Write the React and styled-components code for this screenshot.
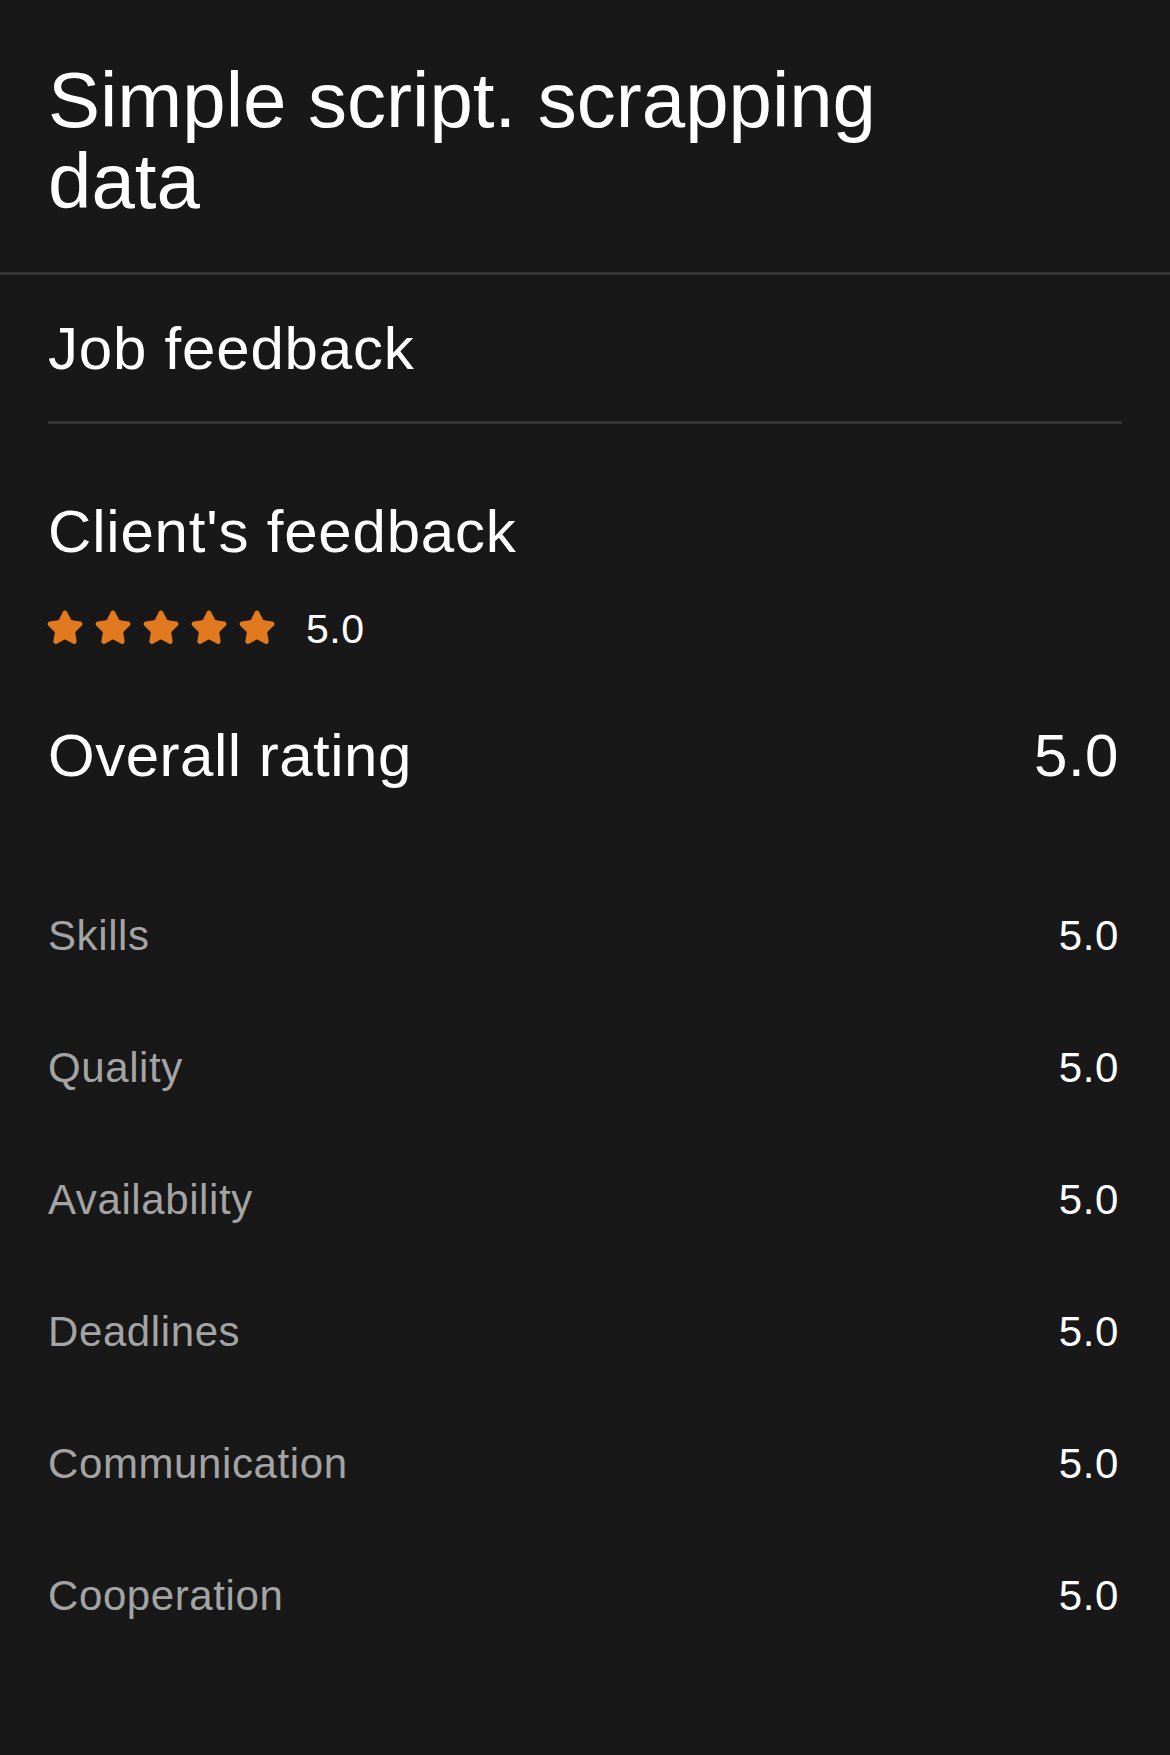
import React from 'react';
import styled, { createGlobalStyle } from 'styled-components';
import { Star } from 'lucide-react';

const ratings = [
  { label: 'Skills', value: '5.0' },
  { label: 'Quality', value: '5.0' },
  { label: 'Availability', value: '5.0' },
  { label: 'Deadlines', value: '5.0' },
  { label: 'Communication', value: '5.0' },
  { label: 'Cooperation', value: '5.0' },
];

const GlobalStyle = createGlobalStyle`
  body {
    margin: 0;
    background-color: #181818;
    font-family: 'Liberation Sans', Arial, sans-serif;
    color: #ffffff;
  }
`;

const App = () => (
  <>
    <GlobalStyle />
    <Page>
      <Header>
        <Title>Simple script. scrapping data</Title>
      </Header>
      <Content>
        <SectionTitle>Job feedback</SectionTitle>
        <Divider />
        <SectionTitle $top={72}>Client's feedback</SectionTitle>
        <StarsRow>
          <Stars>
            {[0, 1, 2, 3, 4].map(i => (
              <Star key={i} size={38} fill="#e2791e" color="#e2791e" strokeWidth={2} />
            ))}
          </Stars>
          <StarsScore>5.0</StarsScore>
        </StarsRow>
        <OverallRow>
          <span>Overall rating</span>
          <OverallValue>5.0</OverallValue>
        </OverallRow>
        <List>
          {ratings.map(item => (
            <Row key={item.label}>
              <Label>{item.label}</Label>
              <Value>{item.value}</Value>
            </Row>
          ))}
        </List>
      </Content>
    </Page>
  </>
);

const Page = styled.div`
  min-height: 100vh;
  background-color: #181818;
`;

const Header = styled.header`
  padding: 60px 48px 50px;
  border-bottom: 3px solid #353535;
`;

const Title = styled.h1`
  margin: 0;
  max-width: 900px;
  font-size: 78px;
  line-height: 81px;
  font-weight: 400;
`;

const Content = styled.main`
  padding: 38px 48px 0;
`;

const SectionTitle = styled.h2`
  margin: ${p => p.$top || 0}px 0 0;
  font-size: 60px;
  line-height: 72px;
  font-weight: 400;
  letter-spacing: 0.8px;
`;

const Divider = styled.hr`
  margin: 36px 0 0;
  border: none;
  height: 3px;
  background-color: #353535;
`;

const StarsRow = styled.div`
  display: flex;
  align-items: center;
  gap: 30px;
  height: 48px;
  margin-top: 36px;
`;

const Stars = styled.div`
  display: flex;
  gap: 10px;
  margin-left: -2px;
`;

const StarsScore = styled.span`
  font-size: 41px;
  letter-spacing: 0.5px;
  padding-top: 2px;
`;

const OverallRow = styled.div`
  display: flex;
  justify-content: space-between;
  margin-top: 68px;
  font-size: 60px;
  line-height: 72px;
  letter-spacing: 0.5px;
`;

const OverallValue = styled.span`
  margin-right: 3px;
`;

const List = styled.ul`
  list-style: none;
  margin: 78px 0 0;
  padding: 0;
`;

const Row = styled.li`
  display: flex;
  justify-content: space-between;
  align-items: center;
  height: 132px;
  font-size: 42px;
  letter-spacing: 0.6px;
`;

const Label = styled.span`
  color: #a4a4a4;
`;

const Value = styled.span`
  color: #ffffff;
  margin-right: 3px;
`;

export default App;
